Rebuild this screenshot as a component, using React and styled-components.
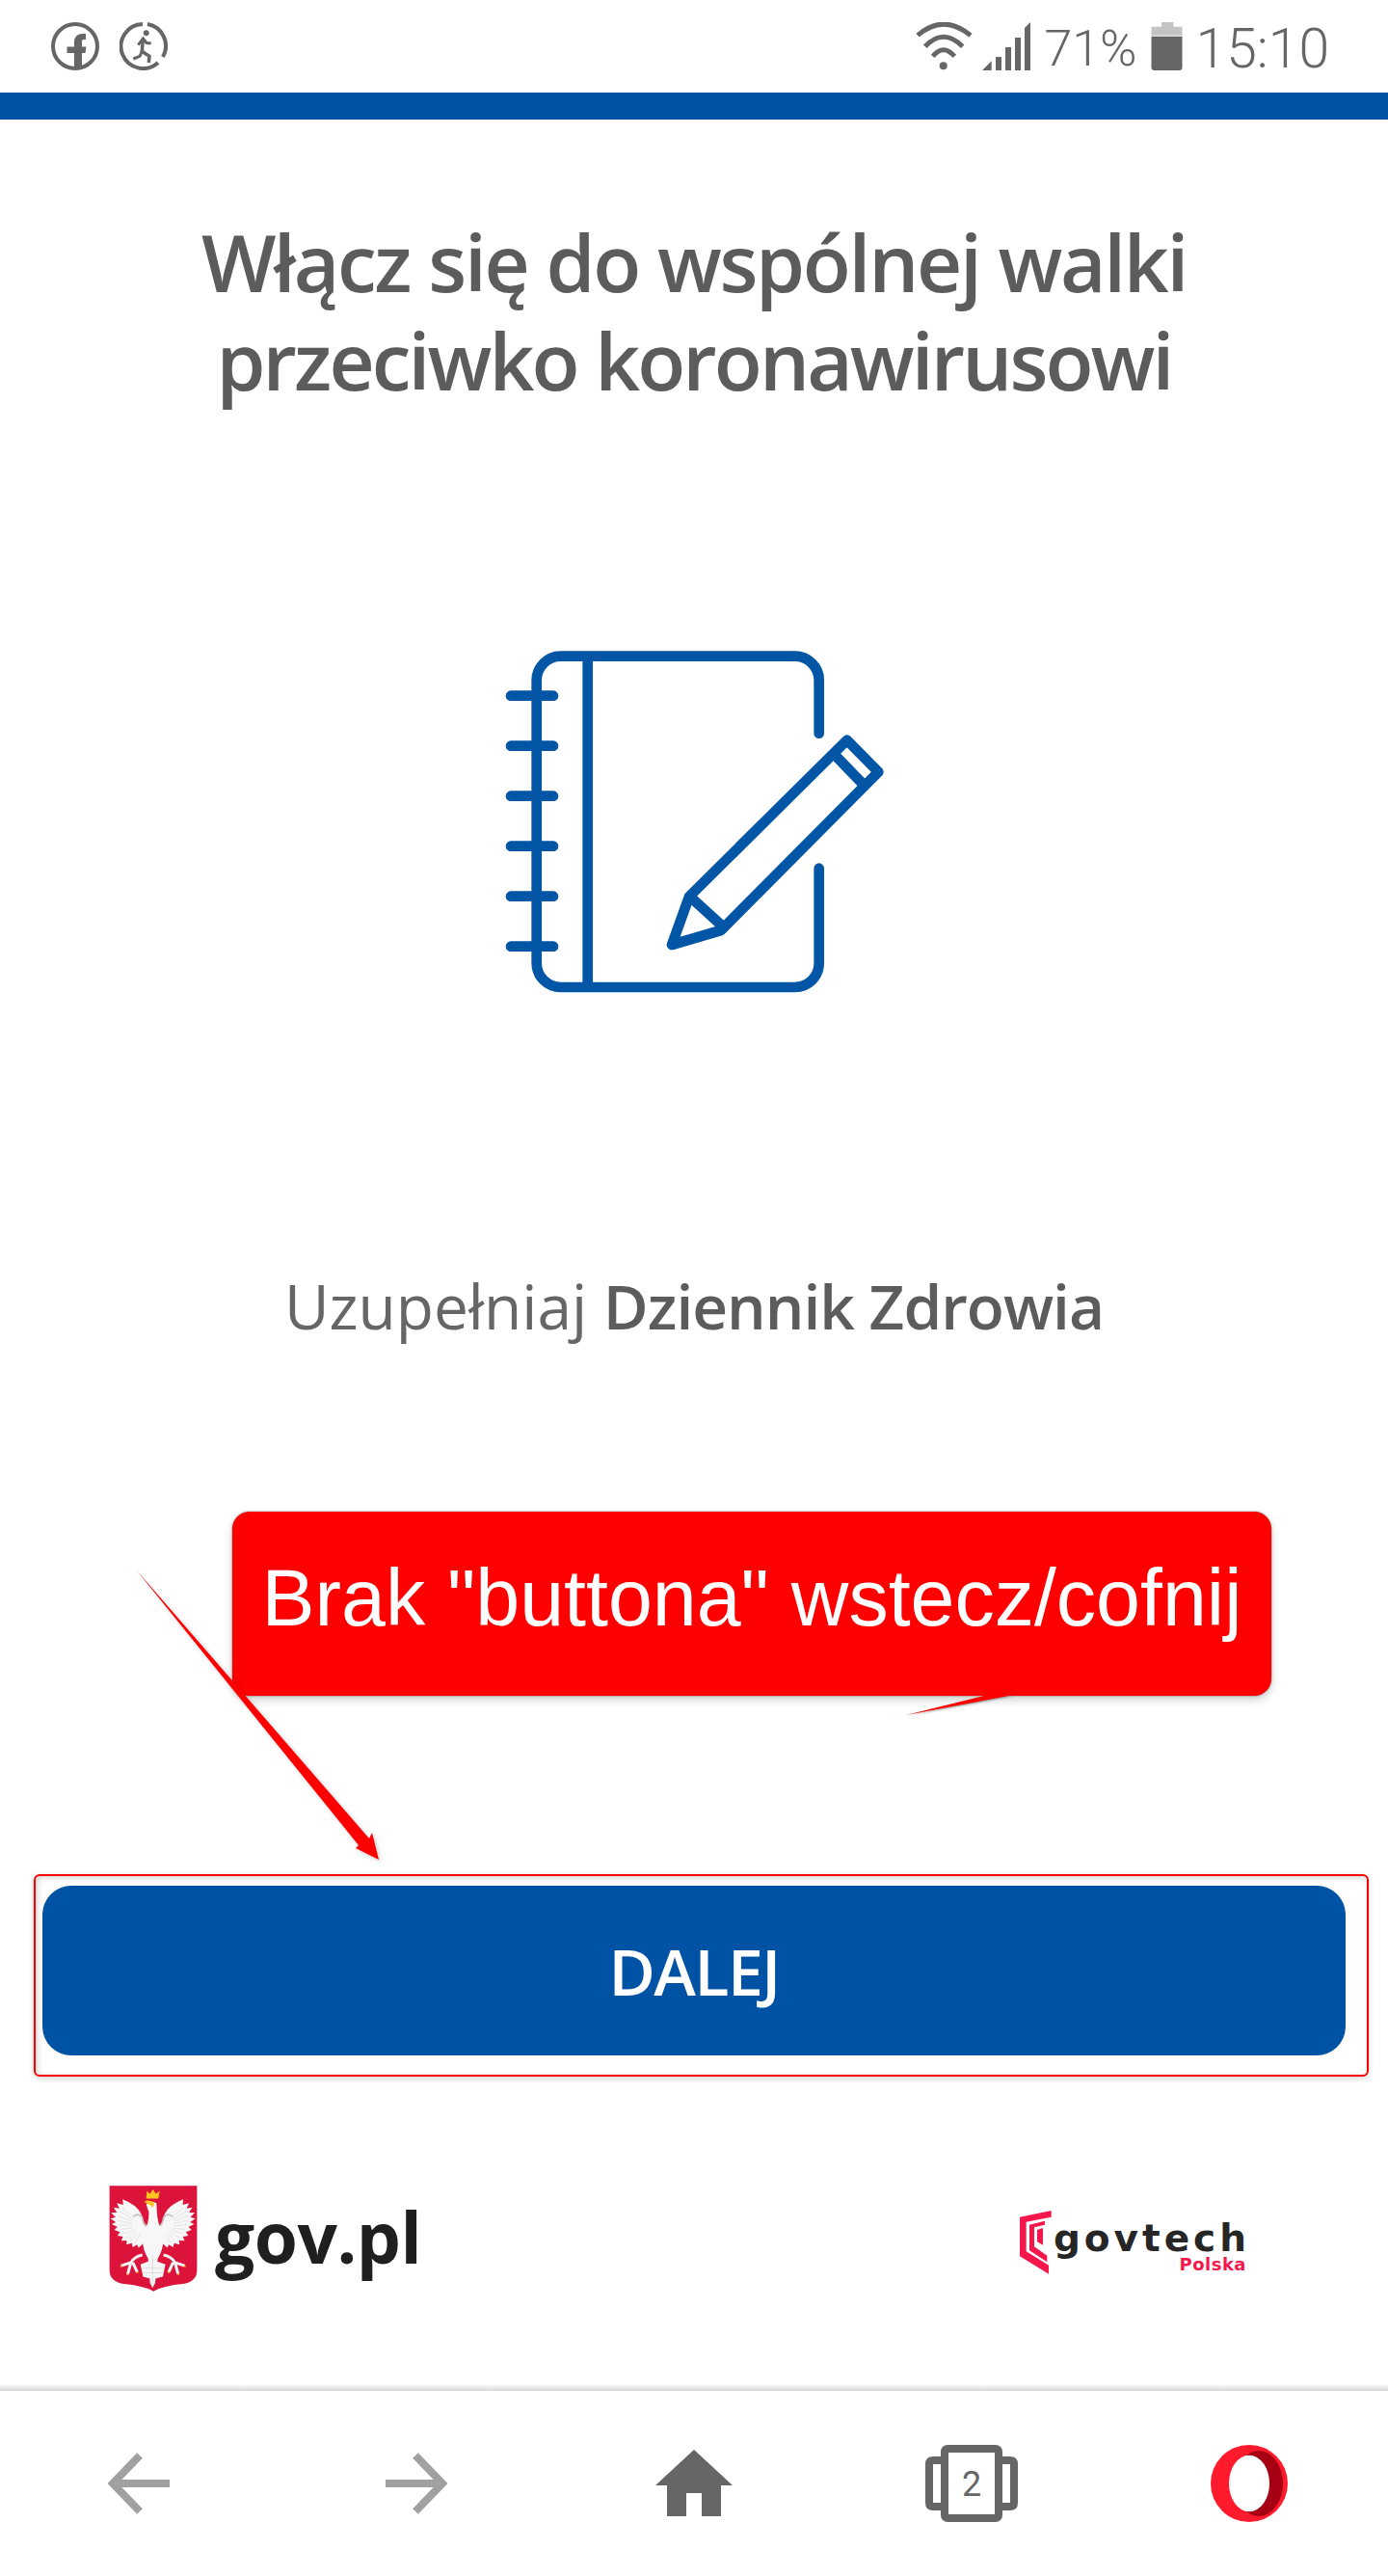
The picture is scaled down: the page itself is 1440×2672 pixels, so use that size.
import React from 'react';
import styled, { createGlobalStyle } from 'styled-components';

const GlobalStyle = createGlobalStyle`
	html, body {
		margin: 0;
		padding: 0;
		background: #fff;
	}
`;

const Page = styled.div`
	position: relative;
	width: 1440px;
	height: 2672px;
	overflow: hidden;
	background: #fff;
	font-family: 'Open Sans', sans-serif;
`;

const StatusBar = styled.div`
	display: flex;
	justify-content: space-between;
	align-items: center;
	height: 96px;
	padding: 0 61px 0 53px;
	box-sizing: border-box;
	color: #666;
	font-family: 'Roboto', sans-serif;
	font-weight: 300;
`;

const StatusGroup = styled.div`
	display: flex;
	align-items: center;
	gap: ${(props) => props.gap}px;
`;

const StatusText = styled.span`
	padding-top: 5px;
	font-size: ${(props) => props.size}px;
	line-height: 50px;
`;

const WifiSvg = styled.svg`
	margin-right: -5px;
`;

const BlueBar = styled.div`
	height: 28px;
	background: #0052a5;
`;

const Title = styled.h1`
	margin: 96px 0 0;
	text-align: center;
	font-size: 82px;
	line-height: 102px;
	font-weight: 600;
	color: #5c5c5c;
`;

const TitleLine = styled.span`
	display: block;
	letter-spacing: ${(props) => props.spacing}px;
`;

const Hero = styled.svg`
	display: block;
	margin: 216px auto 0;
`;

const Description = styled.p`
	margin: 255px 0 0;
	text-align: center;
	font-size: 64px;
	line-height: 80px;
	font-weight: 400;
	color: #666;

	strong {
		font-weight: 600;
		letter-spacing: -1px;
		color: #5c5c5c;
	}
`;

const ButtonWrap = styled.div`
	position: relative;
	margin: 561px 44px 0;
`;

const NextButton = styled.button`
	display: block;
	width: 100%;
	height: 176px;
	border: 0;
	border-radius: 30px;
	background: #0052a5;
	color: #fff;
	font-family: 'Open Sans', sans-serif;
	font-size: 66px;
	font-weight: 600;
	letter-spacing: -1.5px;
`;

const ButtonOutline = styled.div`
	position: absolute;
	top: -12px;
	left: -9px;
	right: -24px;
	bottom: -22px;
	border: 2px solid #ff0000;
	border-radius: 6px;
	box-shadow: 0 2px 6px rgba(0, 0, 0, 0.18), inset 2px 2px 6px rgba(0, 0, 0, 0.16);
	pointer-events: none;
`;

const LogoRow = styled.div`
	display: flex;
	justify-content: space-between;
	align-items: center;
	height: 110px;
	margin-top: 135px;
	padding: 0 147px 0 113px;
`;

const GovLogo = styled.div`
	display: flex;
	align-items: center;
	gap: 18px;
`;

const GovText = styled.span`
	margin-top: -4px;
	font-size: 73px;
	line-height: 106px;
	font-weight: 700;
	letter-spacing: -0.5px;
	color: #1f1f1f;
`;

const TechLogo = styled.div`
	display: flex;
	align-items: flex-start;
	gap: 2px;
	margin-top: 8px;
`;

const TechWords = styled.div`
	display: flex;
	flex-direction: column;
	align-items: flex-end;
	margin-top: 11px;
`;

const TechName = styled.span`
	margin-right: -4px;
	font-family: 'DejaVu Sans', sans-serif;
	font-size: 39px;
	line-height: 36px;
	font-weight: 700;
	letter-spacing: 4px;
	color: #262626;
`;

const TechSub = styled.span`
	font-family: 'DejaVu Sans', sans-serif;
	font-size: 18px;
	line-height: 18px;
	font-weight: 700;
	letter-spacing: 0.5px;
	color: #f5174b;
`;

const NavShadow = styled.div`
	height: 7px;
	margin-top: 96px;
	background: linear-gradient(#fff, #d6d6d6);
`;

const Nav = styled.nav`
	display: grid;
	grid-template-columns: repeat(5, 1fr);
	align-items: center;
	justify-items: center;
	height: 192px;
`;

const Callout = styled.div`
	position: absolute;
	left: 241px;
	top: 1568px;
	display: flex;
	justify-content: center;
	width: 1078px;
	height: 191px;
	padding-top: 44px;
	box-sizing: border-box;
	border-radius: 18px;
	background: #ff0000;
	color: #fff;
	font-family: 'Liberation Sans', sans-serif;
	font-size: 82.5px;
	line-height: 90px;
	white-space: nowrap;
	box-shadow: 0 0 2px rgba(0, 0, 0, 0.55), 0 4px 10px rgba(0, 0, 0, 0.2);
`;

const CalloutTail = styled.svg`
	position: absolute;
	left: 699px;
	top: 190px;
	overflow: visible;
	filter: drop-shadow(0 1px 1px rgba(0, 0, 0, 0.4));
`;

const Arrow = styled.svg`
	position: absolute;
	left: 130px;
	top: 1620px;
	filter: drop-shadow(2px 2px 2px rgba(0, 0, 0, 0.2));
`;

const FacebookIcon = () => (
	<svg width="50" height="50" viewBox="0 0 50 50">
		<circle cx="25" cy="25" r="23" fill="none" stroke="#666" strokeWidth="4" />
		<path
			fill="#666"
			d="M24 47.5V32H16.5V25.5H24V20.5C24 15 27.5 12 33 12H36V18H33.5C32 18 32 19.5 32 21V25.5H36.5L35.5 32H32V47.5Z"
		/>
	</svg>
);

const RunnerIcon = () => (
	<svg width="50" height="50" viewBox="0 0 50 50" fill="none" stroke="#666" strokeWidth="4">
		<path d="M29 2A23 23 0 0 1 45 36" />
		<path d="M40 42A23 23 0 1 1 24 2" />
		<circle cx="27.7" cy="11.3" r="3" fill="#666" stroke="none" />
		<path strokeWidth="3.5" d="M24.3 17L23.3 30.3L31 35.3L30.3 42" />
		<path strokeWidth="3" d="M19.3 23.7L24.5 17L28 21.5L32.7 22" />
		<path strokeWidth="3" d="M23.3 30.3L21 35.3L14.3 38" />
	</svg>
);

const WifiIcon = () => (
	<WifiSvg width="60" height="50" viewBox="0 0 60 50" fill="none" stroke="#666" strokeWidth="5">
		<path d="M2 13.7Q28.7 -9.5 57 13.7" />
		<path d="M9.7 25.3Q28.7 5.3 48.7 25.3" />
		<path d="M17.7 35.3Q28.7 22 40.3 35.3" />
		<circle cx="28.7" cy="45.3" r="4" fill="#666" stroke="none" />
	</WifiSvg>
);

const SignalIcon = () => (
	<svg width="50" height="50" viewBox="0 0 50 50" fill="#666">
		<path d="M0 50L9.7 40.3V50Z" />
		<path d="M14 36H20V50H14Z" />
		<path d="M24 26H30V50H24Z" />
		<path d="M34 16H40V50H34Z" />
		<path d="M44 6L50 0V50H44Z" />
	</svg>
);

const BatteryIcon = () => (
	<svg width="33" height="50" viewBox="0 0 33 50">
		<path fill="#c4c4c4" d="M11 0H23.5V4.7H32.5V13.7H0.5V4.7H11Z" />
		<path fill="#666" d="M0.5 14.7H32.5V47Q32.5 50 29.5 50H3.5Q0.5 50 0.5 47Z" />
	</svg>
);

// współrzędne wzięte z kadru 470x420 wokół środka ekranu
const NotebookIcon = () => (
	<Hero width="480" height="420" viewBox="0 0 480 420" fill="none" stroke="#0355a5" strokeWidth="10.7" strokeLinecap="round" strokeLinejoin="round">
		<path d="M369.7 120.7V66A25 25 0 0 0 344.7 40.7H102A25 25 0 0 0 76.7 66V359A25 25 0 0 0 102 384H344.7A25 25 0 0 0 369.7 359V260.7" />
		<path strokeLinecap="butt" d="M129.7 40.7V384" />
		{[81.7, 133.7, 185.7, 237.7, 289.7, 341.7].map((y) => (
			<path key={y} d={`M50 ${y}H94`} />
		))}
		<path d="M217 340L235 290L398.7 127.7L431.3 160.7L268 325Z" />
		<path d="M238 292L271 322" />
		<path d="M386 143L415 173" />
	</Hero>
);

const BackIcon = ({ flip }) => (
	<svg width="64" height="64" viewBox="0 0 64 64" fill="none" stroke="#a0a0a0" strokeWidth="8" style={flip ? { transform: 'scaleX(-1)' } : undefined}>
		<path d="M64 32H6" />
		<path d="M33 3L5 32L33 61" />
	</svg>
);

const HomeIcon = () => (
	<svg width="80" height="70" viewBox="0 0 80 70" fill="#666">
		<path d="M40 0L80 37H68V69H48V45H32V69H12V37H0Z" />
	</svg>
);

const TabsIcon = () => (
	<svg width="96" height="80" viewBox="0 0 96 80" fill="none" stroke="#666" strokeWidth="8" strokeLinejoin="round">
		<rect x="20" y="4" width="56" height="72" rx="3" />
		<path d="M20 16H8Q4 16 4 20V60Q4 64 8 64H20" />
		<path d="M76 16H88Q92 16 92 20V60Q92 64 88 64H76" />
		<text x="48" y="53" textAnchor="middle" fontFamily="Roboto, sans-serif" fontSize="36" fill="#666" stroke="none">
			2
		</text>
	</svg>
);

const OperaIcon = () => (
	<svg width="80" height="80" viewBox="0 0 80 80">
		<circle cx="40" cy="40" r="40" fill="#ff1b2d" />
		<ellipse cx="50" cy="40" rx="25" ry="34" fill="#a70014" />
		<ellipse cx="40" cy="40" rx="21" ry="29.3" fill="#fff" />
	</svg>
);

const wingRoot = [135, 150];
const wingTips = [
	[66, 64],
	[48, 76],
	[38, 90],
	[30, 106],
	[28, 124],
	[32, 142],
	[40, 160],
	[50, 178],
	[62, 194],
	[78, 206],
	[98, 214],
	[116, 216],
];

// poszarpana krawędź skrzydła: czubek piór i wcięcie między nimi
const wingPath = () => {
	let d = `M128 120Q118 84 ${wingTips[0][0]} ${wingTips[0][1]}`;
	wingTips.forEach(([x, y], i) => {
		if (i > 0) {
			const [px, py] = wingTips[i - 1];
			const mx = (px + x) / 2;
			const my = (py + y) / 2;
			d += `L${mx + (wingRoot[0] - mx) * 0.14} ${my + (wingRoot[1] - my) * 0.14}L${x} ${y}`;
		}
	});
	return d + 'L145 190L145 150Q128 150 128 120Z';
};

const Wing = ({ mirror }) => (
	<g transform={mirror ? 'translate(322 0) scale(-1 1)' : undefined}>
		<path d={wingPath()} fill="#f7f7f7" />
		{wingTips.slice(1, 11).map(([x, y]) => (
			<path key={x} d={`M${x + (wingRoot[0] - x) * 0.2} ${y + (wingRoot[1] - y) * 0.2}L${x + (wingRoot[0] - x) * 0.62} ${y + (wingRoot[1] - y) * 0.62}`} stroke="#d4d4d4" strokeWidth="1.6" />
		))}
		<path d="M100 118Q116 104 128 122Q130 146 148 150" fill="none" stroke="#c4c4c4" strokeWidth="5" />
		<path d="M128 238Q102 244 92 262L62 272M92 262L82 298M98 262L112 292" fill="none" stroke="#f7f7f7" strokeWidth="9" />
		<path d="M64 271l-5 4M82 296l-2 5M111 290l2 5" stroke="#f2b72a" strokeWidth="5" />
	</g>
);

const Crest = () => (
	<svg width="92" height="110" viewBox="24 21 276 332">
		<path fill="#dc143c" d="M25 22H299V285Q299 320 260 328Q190 335 162 352Q135 335 65 328Q25 320 25 285Z" />
		<Wing />
		<Wing mirror />
		<path fill="#f7f7f7" d="M140 80Q150 66 172 76L174 110Q176 140 190 170Q200 210 176 250L168 326L160 342L152 326L146 250Q122 210 132 170Q150 135 148 105Z" />
		<path fill="#f7f7f7" d="M122 268L148 258L152 312L130 306ZM200 268L172 258L168 312L192 306Z" />
		<path d="M128 280H194M130 294H192M160 240V330" stroke="#cfcfcf" strokeWidth="2" />
		<path fill="#fdc41f" d="M140 62L142 38L152 47L161 33L170 47L182 38L178 62Z" />
		<path fill="#fdc41f" d="M133 72Q150 62 166 76L160 90Q150 78 133 72Z" />
	</svg>
);

const TechMark = () => (
	<svg width="33" height="66" viewBox="118 98 99 198" fill="#f5174b">
		<path d="M118 118L216 98V118L138 133V225L208 268V295L118 240Z" />
		<path d="M148 142L196 130V142L163 150V210L203 238V258L148 222Z" />
		<path d="M172 158L190 152V205L172 195Z" />
	</svg>
);

const App = () => (
	<Page>
		<GlobalStyle />
		<StatusBar>
			<StatusGroup gap={21}>
				<FacebookIcon />
				<RunnerIcon />
			</StatusGroup>
			<StatusGroup gap={14}>
				<WifiIcon />
				<SignalIcon />
				<StatusText size={52}>71%</StatusText>
				<BatteryIcon />
				<StatusText size={57}>15:10</StatusText>
			</StatusGroup>
		</StatusBar>
		<BlueBar />
		<Title>
			<TitleLine spacing={-2.3}>Włącz się do wspólnej walki</TitleLine>
			<TitleLine spacing={-2.9}>przeciwko koronawirusowi</TitleLine>
		</Title>
		<NotebookIcon />
		<Description>
			Uzupełniaj <strong>Dziennik Zdrowia</strong>
		</Description>
		<ButtonWrap>
			<NextButton>DALEJ</NextButton>
			<ButtonOutline />
		</ButtonWrap>
		<LogoRow>
			<GovLogo>
				<Crest />
				<GovText>gov.pl</GovText>
			</GovLogo>
			<TechLogo>
				<TechMark />
				<TechWords>
					<TechName>govtech</TechName>
					<TechSub>Polska</TechSub>
				</TechWords>
			</TechLogo>
		</LogoRow>
		<NavShadow />
		<Nav>
			<BackIcon />
			<BackIcon flip />
			<HomeIcon />
			<TabsIcon />
			<OperaIcon />
		</Nav>
		<Callout>
			Brak "buttona" wstecz/cofnij
			<CalloutTail width="115" height="22" viewBox="0 0 115 22">
				<path fill="#ff0000" d="M85 0H112L0 21Z" />
			</CalloutTail>
		</Callout>
		<Arrow width="280" height="320" viewBox="130 1620 280 320">
			<path fill="#ff0000" d="M141 1628L383 1907L386 1901L393 1929L369 1917L372 1914Z" />
		</Arrow>
	</Page>
);

export default App;
